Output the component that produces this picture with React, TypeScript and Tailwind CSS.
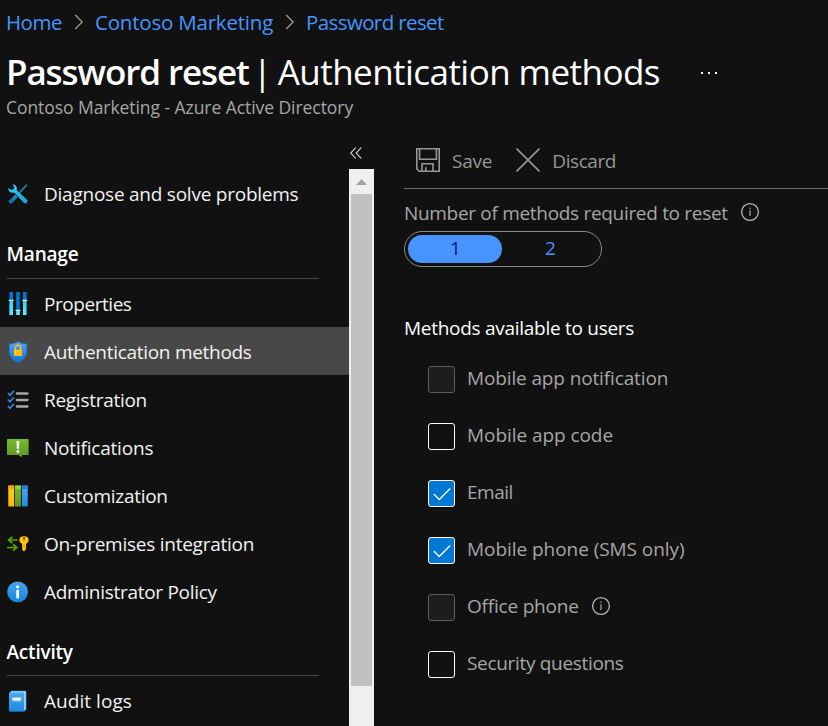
import React, { useState } from 'react';

type IconProps = { className?: string };

function ToolsIcon({ className }: IconProps) {
  return (
    <svg viewBox="0 0 20 20" className={className}>
      <defs>
        <linearGradient id="driver" x1="1" y1="0" x2="0" y2="1">
          <stop offset="0" stopColor="#1f9fc4" />
          <stop offset="0.5" stopColor="#1878b8" />
          <stop offset="1" stopColor="#0a5fae" />
        </linearGradient>
        <linearGradient id="wrench" x1="0" y1="0" x2="1" y2="1">
          <stop offset="0" stopColor="#32d4f5" />
          <stop offset="1" stopColor="#1aa0d8" />
        </linearGradient>
      </defs>
      <path d="M18.3 0.3 L19.5 1.2 L11.3 10.3 L10 9 Z" fill="#1f86a8" />
      <path d="M7.4 10.8 L9.7 13 L4 19.2 Q2.8 20.2 1.4 19.1 Q0 17.7 1 16.5 Z" fill="url(#driver)" />
      <path
        d="M4.4 0.3 Q7.6 0.1 8.6 2.8 Q9.2 4.7 8.5 6 L19 15.8 Q20.1 17.2 19 18.7 Q17.5 20 16 19 L6.2 8.5 Q3.5 9.4 1.6 7.7 Q0 6 0.4 3.9 L3.3 6 L5.8 4.9 L6.2 2.9 Z"
        fill="url(#wrench)"
      />
    </svg>
  );
}

function PropertiesIcon({ className }: IconProps) {
  return (
    <svg viewBox="0 0 20 24" className={className}>
      <defs>
        <linearGradient id="slider" x1="0" y1="0" x2="0" y2="1">
          <stop offset="0" stopColor="#32d4f5" />
          <stop offset="1" stopColor="#5cebff" />
        </linearGradient>
      </defs>
      <path d="M1.4 0h3.6v8H1.4zM8.2 0h3.6v18H8.2zM15 0h3.6v8H15z" fill="#0078d4" />
      <path d="M1.4 9h3.6v14H1.4zM8.2 19h3.6v4H8.2zM15 9h3.6v14H15z" fill="url(#slider)" />
      <path d="M0.7 7.7h5v1.4h-5zM7.5 17.7h5v1.4h-5zM14.3 7.7h5v1.4h-5z" fill="#c9eef7" />
    </svg>
  );
}

function ShieldIcon({ className }: IconProps) {
  return (
    <svg viewBox="0 0 20 24" className={className}>
      <defs>
        <linearGradient id="shield" x1="0" y1="0" x2="0" y2="1">
          <stop offset="0" stopColor="#5ea0ef" />
          <stop offset="1" stopColor="#0078d4" />
        </linearGradient>
      </defs>
      <path d="M10 1 Q13 3.6 19 3.6 V11.5 Q19 18 10 23 Q1 18 1 11.5 V3.6 Q7 3.6 10 1 Z" fill="#1b7fdc" />
      <path d="M10 2 Q13 4.4 18.2 4.4 V11.5 Q18.2 17.3 10 22 Q1.8 17.3 1.8 11.5 V4.4 Q7 4.4 10 2 Z" fill="url(#shield)" />
      <path d="M7.3 10.5 V8 Q7.3 5.2 10 5.2 Q12.7 5.2 12.7 8 V10.5" fill="none" stroke="#ffc400" strokeWidth="1.5" />
      <rect x="6" y="9.8" width="8" height="6.2" rx="0.6" fill="#ffca00" />
      <path d="M6.2 16 L14 10 V15.4 Q14 16 13.4 16 Z" fill="#ffb81a" />
      <circle cx="10" cy="12.4" r="0.9" fill="#ff9a1f" />
    </svg>
  );
}

function ChecklistIcon({ className }: IconProps) {
  return (
    <svg viewBox="0 0 22 20" className={className}>
      {[0, 6.5, 13].map((y) => (
        <g key={y} transform={`translate(0 ${y})`}>
          <path d="M0.8 3 L3 5.2 L7 0.8" fill="none" stroke="#2f8ae0" strokeWidth="1.7" />
          <path d="M9.8 3.5 H20.5" stroke="#a6a6a6" strokeWidth="2.3" strokeLinecap="round" />
        </g>
      ))}
    </svg>
  );
}

function NotificationIcon({ className }: IconProps) {
  return (
    <svg viewBox="0 0 22 20" className={className}>
      <defs>
        <linearGradient id="bubble" x1="0" y1="0" x2="0" y2="1">
          <stop offset="0" stopColor="#76bc2d" />
          <stop offset="1" stopColor="#5e9624" />
        </linearGradient>
      </defs>
      <path d="M0.6 1 H21 Q21.6 1 21.6 1.6 V16.4 Q21.6 17 21 17 H14.8 V19.6 L11.4 17 H0.6 Q0 17 0 16.4 V1.6 Q0 1 0.6 1 Z" fill="url(#bubble)" />
      <path d="M9.5 3 H12.3 L11.9 11 H9.9 Z" fill="#fff" />
      <circle cx="10.9" cy="13.4" r="1.5" fill="#fff" />
    </svg>
  );
}

function CustomizationIcon({ className }: IconProps) {
  return (
    <svg viewBox="0 0 20 22" className={className}>
      <defs>
        <linearGradient id="book1" x1="0" y1="0" x2="0" y2="1">
          <stop offset="0" stopColor="#ffd90a" />
          <stop offset="1" stopColor="#ffb317" />
        </linearGradient>
        <linearGradient id="book2" x1="0" y1="0" x2="0" y2="1">
          <stop offset="0" stopColor="#76bc2d" />
          <stop offset="1" stopColor="#5e9624" />
        </linearGradient>
        <linearGradient id="book3" x1="0" y1="0" x2="0" y2="1">
          <stop offset="0" stopColor="#5ea0ef" />
          <stop offset="1" stopColor="#1593ec" />
        </linearGradient>
      </defs>
      <rect x="0.3" y="0.5" width="5.9" height="21" rx="0.5" fill="url(#book1)" />
      <rect x="0.3" y="0.5" width="5.9" height="3.5" rx="0.5" fill="#ff9a1f" />
      <rect x="7" y="0.5" width="5.9" height="21" rx="0.5" fill="url(#book2)" />
      <rect x="7" y="0.5" width="5.9" height="3.5" rx="0.5" fill="#86d633" />
      <rect x="13.8" y="0.5" width="5.9" height="21" rx="0.5" fill="url(#book3)" />
      <rect x="13.8" y="0.5" width="5.9" height="3.5" rx="0.5" fill="#1b7fdc" />
    </svg>
  );
}

function IntegrationIcon({ className }: IconProps) {
  return (
    <svg viewBox="0 0 22 16" className={className}>
      <path d="M5.4 0.8 L1.6 4 L5.4 7.2 M1.8 4 H10.6" fill="none" stroke="#57a300" strokeWidth="1.7" />
      <path d="M6 8.3 L9.8 11.5 L6 14.7 M0 11.5 H9.5" fill="none" stroke="#57a300" strokeWidth="1.7" />
      <path
        d="M17 0.3 Q21.6 0.3 21.7 4.2 Q21.6 6.8 19 7.9 V13.2 L17 15.4 L15.2 13.6 V7.9 Q12.4 6.8 12.3 4.2 Q12.4 0.3 17 0.3 Z"
        fill="#ffc80a"
      />
      <path d="M17.6 8.6 V14" stroke="#ff9300" strokeWidth="0.8" />
      <circle cx="17" cy="2.2" r="1.2" fill="#8a4a00" />
      <path d="M14.8 4.6 H19.2" stroke="#ff9300" strokeWidth="0.9" />
    </svg>
  );
}

function InfoCircleIcon({ className }: IconProps) {
  return (
    <svg viewBox="0 0 22 22" className={className}>
      <defs>
        <linearGradient id="info" x1="0" y1="0" x2="0" y2="1">
          <stop offset="0" stopColor="#4aa3ee" />
          <stop offset="1" stopColor="#1288e0" />
        </linearGradient>
      </defs>
      <circle cx="10.6" cy="10.9" r="10.4" fill="url(#info)" />
      <rect x="9.3" y="8.8" width="2.7" height="8.6" rx="0.8" fill="#fff" />
      <circle cx="10.6" cy="5.8" r="1.6" fill="#fff" />
    </svg>
  );
}

function LogIcon({ className }: IconProps) {
  return (
    <svg viewBox="0 0 20 22" className={className}>
      <defs>
        <linearGradient id="log" x1="0" y1="0" x2="0" y2="1">
          <stop offset="0" stopColor="#50a8f0" />
          <stop offset="1" stopColor="#188ae0" />
        </linearGradient>
      </defs>
      <path d="M3 0.4 H17.4 Q18.6 0.4 18.6 1.6 V19 L16.8 21.4 H2 Z" fill="#1060a8" />
      <path d="M3 1.2 H17.8 V19.4 L16 20.8 V3 H2 Z" fill="#b4dcf8" />
      <path d="M1 2.6 H16.2 V20.4 Q16.2 21.4 15.2 21.4 H2 Q1 21.4 1 20.4 Z" fill="url(#log)" />
      <rect x="4" y="7" width="9.4" height="4.4" fill="#7cc3f5" />
      <rect x="4.8" y="8" width="7.8" height="2.4" fill="#fff" />
    </svg>
  );
}

function InfoOutline({ className }: IconProps) {
  return (
    <svg viewBox="0 0 20 20" fill="none" className={className}>
      <circle cx="10" cy="10" r="8.4" stroke="#b8b8b8" strokeWidth="1.3" />
      <path d="M10 8.2 V14" stroke="#969696" strokeWidth="1.4" />
      <path d="M10 5.4 V7" stroke="#969696" strokeWidth="1.4" />
    </svg>
  );
}

function BreadcrumbArrow() {
  return (
    <svg viewBox="0 0 10 16" fill="none" className="ml-3 mr-[11px] h-4 w-2.5">
      <path d="M1.2 1 L8.2 8 L1.2 15" stroke="#a0a0a0" strokeWidth="1.2" />
    </svg>
  );
}

const manageItems = [
  { label: 'Properties', icon: PropertiesIcon, size: 'h-6 w-5', tracking: 'tracking-[-0.45px]' },
  { label: 'Authentication methods', icon: ShieldIcon, size: 'h-6 w-5', tracking: 'tracking-[-0.29px]' },
  { label: 'Registration', icon: ChecklistIcon, size: 'h-5 w-[22px]', tracking: 'tracking-[-0.28px]' },
  { label: 'Notifications', icon: NotificationIcon, size: 'h-5 w-[22px]', tracking: 'tracking-[-0.2px]' },
  { label: 'Customization', icon: CustomizationIcon, size: 'h-[22px] w-5', tracking: 'tracking-[-0.28px]' },
  { label: 'On-premises integration', icon: IntegrationIcon, size: 'h-4 w-[22px]', tracking: 'tracking-[-0.25px]' },
  { label: 'Administrator Policy', icon: InfoCircleIcon, size: 'h-[22px] w-[22px]', tracking: 'tracking-[-0.29px]' },
];

const initialMethods = [
  { label: 'Mobile app notification', tracking: 'tracking-[-0.13px]', checked: false, disabled: true, info: false },
  { label: 'Mobile app code', tracking: 'tracking-[-0.06px]', checked: false, disabled: false, info: false },
  { label: 'Email', tracking: 'tracking-[-0.5px]', checked: true, disabled: false, info: false },
  { label: 'Mobile phone (SMS only)', tracking: 'tracking-[-0.05px]', checked: true, disabled: false, info: false },
  { label: 'Office phone', tracking: 'tracking-[-0.2px]', checked: false, disabled: true, info: true },
  { label: 'Security questions', tracking: 'tracking-[-0.32px]', checked: false, disabled: false, info: false },
];

function NavItem({ label, icon: Icon, size, tracking, active, onClick }: {
  label: string;
  icon: (props: IconProps) => React.ReactNode;
  size: string;
  tracking: string;
  active?: boolean;
  onClick?: () => void;
}) {
  return (
    <button
      onClick={onClick}
      className={`flex h-12 w-full shrink-0 items-center pl-[7px] pt-0.5 text-left font-[450] text-[#f2f2f2] ${active ? 'bg-[#484848]' : ''}`}
    >
      <span className="flex w-[22px] shrink-0 justify-center">
        <Icon className={size} />
      </span>
      <span className={`ml-[15px] whitespace-nowrap ${tracking}`}>{label}</span>
    </button>
  );
}

function NavHeading({ children, className }: { children: React.ReactNode; className: string }) {
  return (
    <h2 className={`ml-[7px] mr-[30px] flex shrink-0 items-center border-b border-[#484848] font-semibold text-white ${className}`}>
      <span className="-ml-[0.5px]">{children}</span>
    </h2>
  );
}

export default function App() {
  const [active, setActive] = useState('Authentication methods');
  const [required, setRequired] = useState(1);
  const [methods, setMethods] = useState(initialMethods);

  const toggle = (label: string) => {
    setMethods((prev) => prev.map((m) => (m.label === label && !m.disabled ? { ...m, checked: !m.checked } : m)));
  };

  return (
    <div className="flex h-[726px] w-[828px] flex-col overflow-hidden bg-[#111111] font-['Open_Sans','Noto_Sans',sans-serif] text-[19px] leading-6 tracking-[-0.2px]">
      <nav className="flex h-[45px] shrink-0 items-center pb-px pl-1.5 text-[20.5px] text-[#4894fe]">
        <a className="tracking-[-0.5px]">Home</a>
        <BreadcrumbArrow />
        <a>Contoso Marketing</a>
        <BreadcrumbArrow />
        <a className="tracking-[-0.62px]">Password reset</a>
      </nav>
      <div className="flex h-[52px] shrink-0 items-center pl-1.5 pt-0.5 text-[35px] leading-[52px] text-white">
        <h1 className="flex whitespace-nowrap">
          <span className="font-semibold tracking-[-1.1px]">Password reset</span>
          <span className="ml-1 mr-1.5">|</span>
          <span className="tracking-[-0.55px]">Authentication methods</span>
        </h1>
        <span className="ml-[41px] flex gap-[5px] pt-0.5">
          <i className="size-0.5 bg-white" />
          <i className="size-0.5 bg-white" />
          <i className="size-0.5 bg-white" />
        </span>
      </div>
      <p className="h-11 shrink-0 pl-1.5 text-[17.5px] leading-5 tracking-[-0.06px] text-[#a6a6a6]">
        Contoso Marketing - Azure Active Directory
      </p>

      <div className="flex min-h-0 flex-1">
        <aside className="flex w-[374px] shrink-0 flex-col">
          <div className="flex h-7 shrink-0 justify-end pr-3 pt-1.5">
            <svg viewBox="0 0 12 12" fill="none" className="size-3">
              <path d="M5.8 0.5 L0.8 6 L5.8 11.5 M11.3 0.5 L6.3 6 L11.3 11.5" stroke="#e6e6e6" strokeWidth="1.1" />
            </svg>
          </div>
          <div className="flex min-h-0 flex-1">
            <div className="flex w-[349px] flex-col overflow-hidden">
              <NavItem label="Diagnose and solve problems" icon={ToolsIcon} size="size-5" tracking="tracking-[-0.24px]" />
              <NavHeading className="h-[62px] pt-3">Manage</NavHeading>
              {manageItems.map((item) => (
                <NavItem key={item.label} {...item} active={active === item.label} onClick={() => setActive(item.label)} />
              ))}
              <NavHeading className="h-[61px] pt-[13px]">Activity</NavHeading>
              <NavItem label="Audit logs" icon={LogIcon} size="h-[22px] w-5" tracking="tracking-[0.05px]" />
            </div>
            <div className="flex w-[25px] flex-col items-center bg-[#f0f0f0]">
              <svg viewBox="0 0 25 25" className="size-[25px] shrink-0">
                <path d="M7 16 L12.5 10 L18 16 Z" fill="#a3a3a3" />
              </svg>
              <div className="h-[492px] w-[21px] shrink-0 bg-[#c1c1c1]" />
            </div>
          </div>
        </aside>

        <main className="ml-[30px] flex flex-1 flex-col text-[#a6a6a6]">
          <div className="flex h-12 shrink-0 items-start border-b border-[#6a6a6a] pl-3 text-[#979797]">
            <button className="flex h-[38px] items-center">
              <svg viewBox="0 0 24 24" fill="none" stroke="currentColor" strokeWidth="1.6" className="size-6">
                <path d="M0.8 0.8 H23.2 V23.2 H3.2 L0.8 20.8 Z M3.6 0.8 V11.2 H20.4 V0.8 M6 23 V15.8 H17 V23 M9.8 23 V19.2" />
              </svg>
              <span className="ml-3 pt-px">Save</span>
            </button>
            <button className="ml-6 flex h-[38px] items-center">
              <svg viewBox="0 0 24 24" fill="none" stroke="currentColor" strokeWidth="1.6" className="size-6">
                <path d="M0.5 0.5 L23.5 23.5 M23.5 0.5 L0.5 23.5" />
              </svg>
              <span className="ml-3 pt-px tracking-[-0.45px]">Discard</span>
            </button>
          </div>

          <div className="mt-3 flex h-6 items-center">
            <span className="tracking-[-0.31px]">Number of methods required to reset</span>
            <InfoOutline className="mb-0.5 ml-3 size-5" />
          </div>
          <div className="mt-1.5 flex h-9 w-[198px] rounded-full border border-[#8a8a8a] p-[3px]">
            {[1, 2].map((n) => (
              <button
                key={n}
                onClick={() => setRequired(n)}
                className={`flex h-7 items-center justify-center rounded-full pb-0.5 pl-px ${n === 1 ? 'w-[94px]' : 'w-[97px]'} ${required === n ? 'bg-[#4894fe] text-[#11117a]' : 'text-[#4894fe]'}`}
              >
                {n}
              </button>
            ))}
          </div>

          <h3 className="mt-[49px] h-6 tracking-[-0.28px] text-white">Methods available to users</h3>
          <div className="ml-6 mt-[26px] flex flex-col gap-[30px]">
            {methods.map((m) => (
              <div key={m.label} className="flex h-[27px] items-center" onClick={() => toggle(m.label)}>
                <span
                  className={`flex size-[27px] shrink-0 items-center justify-center rounded-[3px] border ${
                    m.disabled ? 'border-[#5c5c5c] bg-[#1d1d1d]' : 'border-white'
                  } ${m.checked ? 'bg-[#0078d4]' : ''}`}
                >
                  {m.checked && (
                    <svg viewBox="0 0 18 14" fill="none" className="h-3.5 w-[18px]">
                      <path d="M0.8 7 L6.3 12.5 L17.2 1.5" stroke="#fff" strokeWidth="1.3" />
                    </svg>
                  )}
                </span>
                <span className={`ml-3 pb-[3px] ${m.tracking}`}>{m.label}</span>
                {m.info && <InfoOutline className="mb-1 ml-3 size-5" />}
              </div>
            ))}
          </div>
        </main>
      </div>
    </div>
  );
}
